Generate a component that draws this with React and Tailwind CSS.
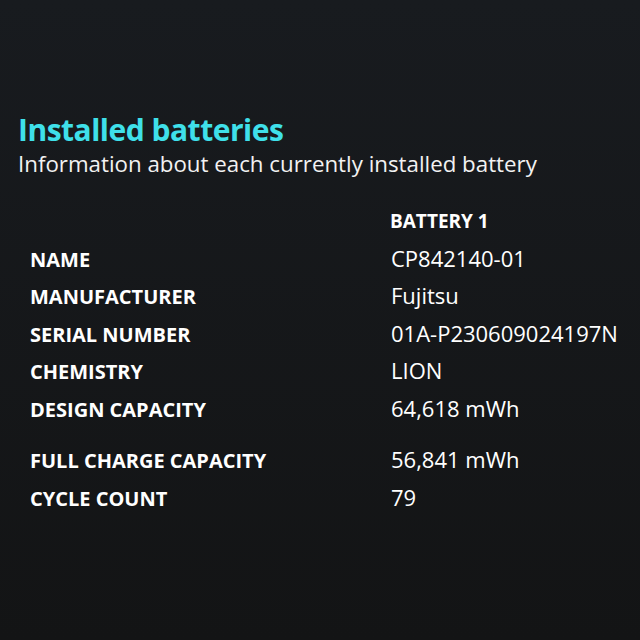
const ROWS = [
  { label: 'NAME', value: 'CP842140-01' },
  { label: 'MANUFACTURER', value: 'Fujitsu' },
  { label: 'SERIAL NUMBER', value: '01A-P230609024197N' },
  { label: 'CHEMISTRY', value: 'LION' },
  { label: 'DESIGN CAPACITY', value: '64,618 mWh' },
  { label: 'FULL CHARGE CAPACITY', value: '56,841 mWh', gap: true },
  { label: 'CYCLE COUNT', value: '79' },
];

export default function App() {
  return (
    <div className="w-[640px] h-[640px] overflow-hidden bg-gradient-to-b from-[#181b1f] to-[#131415] text-white font-['Open_Sans',sans-serif]">
      <div className="pt-[110px] pl-[18px]">
        <h1 className="text-[30px] leading-[40px] font-bold text-[#3fe0ea] tracking-[-0.5px]">
          Installed batteries
        </h1>
        <p className="text-[22.3px] leading-[28px] text-[#f2f2f2]">
          Information about each currently installed battery
        </p>
      </div>

      <div className="mt-[23px] pl-[30px]">
        <div className="flex h-[40px] items-center">
          <div className="w-[360px]" />
          <div className="text-[19px] font-bold">BATTERY 1</div>
        </div>
        {ROWS.map((row) => (
          <div
            key={row.label}
            className={`flex h-[37.5px] items-center ${row.gap ? 'mt-[14px]' : ''}`}
          >
            <div className="w-[361px] text-[20px] font-bold">{row.label}</div>
            <div className="text-[22px] -mt-[3px]">{row.value}</div>
          </div>
        ))}
      </div>
    </div>
  );
}
